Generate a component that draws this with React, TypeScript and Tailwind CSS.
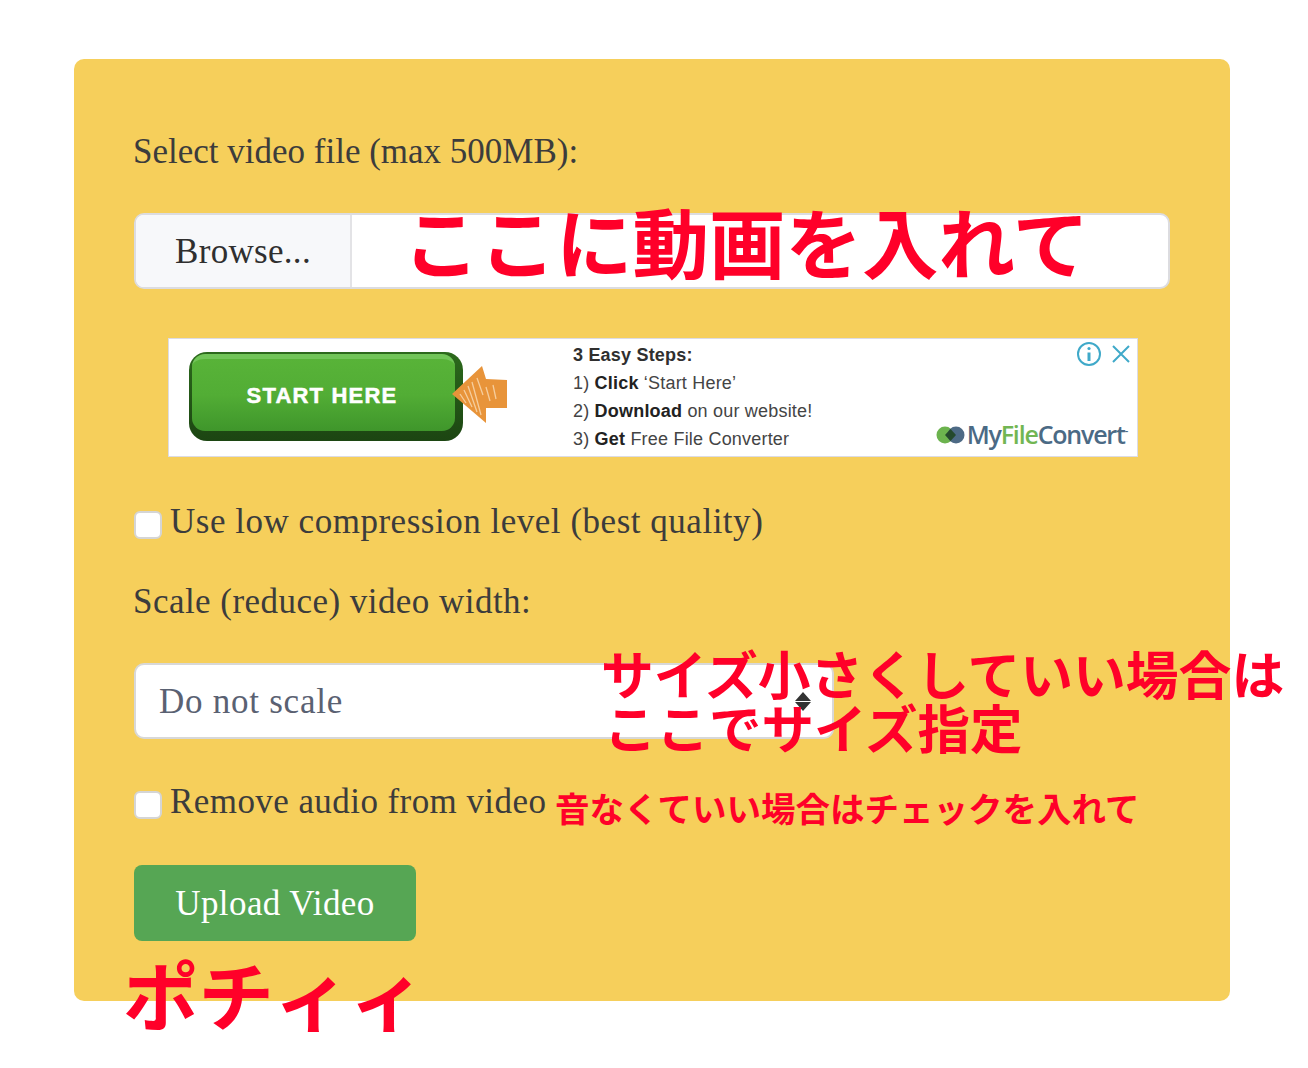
const serif = "font-['Liberation_Serif',serif]";

function Check({ label, track }: { label: string; track: string }) {
  return (
    <label className="flex h-[44px] items-center">
      <span className="mt-[6px] h-[28px] w-[28px] shrink-0 rounded-[6px] border-2 border-[#d5d5d5] bg-white" />
      <span className={`ml-[8px] text-[35px] leading-[44px] text-[#3c3c3c] ${track}`}>{label}</span>
    </label>
  );
}

function Ad() {
  return (
    <div className="relative ml-[34px] mt-[49px] flex h-[119px] w-[970px] border border-[#dcdce4] bg-white font-['Liberation_Sans',sans-serif]">
      <div className="relative ml-[20px] mt-[13px] h-[89px] w-[274px] rounded-[18px] bg-gradient-to-b from-[#2c6a1c] to-[#1c4512] pb-[10px] pl-[3px] pr-[8px] pt-[2px]">
        <div className="flex h-full items-center justify-center rounded-[13px] border-t-[5px] border-[#71c558] bg-gradient-to-b from-[#58b338] via-[#52ad35] to-[#3f962b] pr-[3px] pt-[1px] text-[22px] font-bold tracking-[1.2px] text-white [-webkit-text-stroke:0.5px_white]">
          START HERE
        </div>
      </div>
      <svg className="absolute left-[283px] top-[26px]" width="56" height="60" viewBox="0 0 56 60">
        <path d="M0 29 L30 1 L34 14 L55 15 L55 43 L34 43 L34 58 Z" fill="#e8943a" />
        <path d="M8 29 L14 38 M12 25 L20 42 M16 21 L25 47 M20 17 L29 50 M25 13 L31 30 M34 22 L38 36 M41 20 L44 34" stroke="#f6cd9c" strokeWidth="1.3" />
      </svg>
      <div className="ml-[110px] mt-[2px] text-[18px] leading-[28px] tracking-[0.2px] text-[#444]">
        <p className="font-bold text-[#2f2f2f]">3 Easy Steps:</p>
        <p>1) <b className="text-[#222]">Click</b> ‘Start Here’</p>
        <p>2) <b className="text-[#222]">Download</b> on our website!</p>
        <p>3) <b className="text-[#222]">Get</b> Free File Converter</p>
      </div>
      <svg className="absolute right-[35px] top-[2px]" width="26" height="26" viewBox="0 0 26 26" fill="none" stroke="#3fa9c9" strokeWidth="2">
        <circle cx="13" cy="13" r="11" />
        <path d="M13 11.5V20" strokeWidth="3" />
        <circle cx="13" cy="7.5" r="1.6" fill="#3fa9c9" stroke="none" />
      </svg>
      <svg className="absolute right-[6px] top-[5px]" width="20" height="20" viewBox="0 0 20 20" fill="none" stroke="#3fa9c9" strokeWidth="2">
        <path d="M2 2L18 18M18 2L2 18" />
      </svg>
      <div className="absolute right-[10px] top-[78px] flex items-center font-['Open_Sans',sans-serif] text-[25px] font-semibold leading-[34px] tracking-[-1.2px]">
        <svg className="mr-[2px] mt-[2px]" width="29" height="18" viewBox="0 0 29 18">
          <circle cx="9" cy="9" r="8.5" fill="#6cb34e" />
          <circle cx="20" cy="9" r="8.5" fill="#4d6a85" />
          <path d="M14.5 3L20 9L14.5 15L9 9Z" fill="#24492c" />
        </svg>
        <span className="text-[#4b6a85]">My</span>
        <span className="text-[#72b653]">File</span>
        <span className="text-[#4b6a85]">Convert</span>
        <span className="mb-[8px] text-[11px] leading-none text-[#4b6a85]">-</span>
      </div>
    </div>
  );
}

export default function App() {
  return (
    <div className="relative h-[1068px] w-[1308px] overflow-hidden bg-white">
      <div className={`relative ml-[74px] h-[1001px] pt-[59px] ${serif}`}>
        <form className="h-[942px] w-[1156px] rounded-[10px] bg-[#f6cf5b] px-[60px] pt-[71px]">
          <div className="-ml-px h-[44px] text-[35px] leading-[44px] text-[#3c3c3c]">Select video file (max 500MB):</div>

          <div className="mt-[39px] flex h-[76px] w-[1036px] overflow-hidden rounded-[10px] border-2 border-[#dcdce0] bg-white">
            <div className="flex w-[216px] items-center justify-center border-r-2 border-[#e3e3e6] bg-[#f7f8fa] pt-[2px] text-[35px] tracking-[0.3px] text-[#2f2f2f]">Browse...</div>
          </div>

          <Ad />

          <div className="mt-[43px]">
            <Check label="Use low compression level (best quality)" track="tracking-[0.52px]" />
          </div>

          <div className="-ml-px mt-[36px] h-[44px] text-[35px] leading-[44px] tracking-[0.46px] text-[#3c3c3c]">Scale (reduce) video width:</div>

          <div className="relative mt-[39px] flex h-[76px] w-[700px] items-center rounded-[10px] border-2 border-[#d8d8d8] bg-white pl-[23px] pt-[2px] text-[35px] tracking-[0.75px] text-[#5a6172]">
            Do not scale
            <svg className="absolute right-[21px] top-[27px]" width="16" height="19" viewBox="0 0 16 19" fill="#333">
              <path d="M8 0L16 9H0ZM0 10H16L8 19Z" />
            </svg>
          </div>

          <div className="mt-[41px]">
            <Check label="Remove audio from video" track="tracking-[0.43px]" />
          </div>

          <button type="button" className="mt-[41px] h-[76px] w-[282px] rounded-[8px] bg-[#56a654] pt-[2px] text-[35px] tracking-[0.4px] text-white">Upload Video</button>
        </form>

        {/* hand-written notes laid over the form */}
        <div className="pointer-events-none absolute inset-0 font-['Noto_Sans_CJK_JP',sans-serif] font-bold text-[#ff0029]">
          <span className="absolute left-[329px] top-[186px] whitespace-nowrap text-[76.5px] leading-[108px]">ここに動画を入れて</span>
          <span className="absolute left-[527px] top-[636px] whitespace-nowrap text-[52.8px] leading-[72px]">サイズ小さくしていい場合は</span>
          <span className="absolute left-[530px] top-[690px] whitespace-nowrap text-[52.5px] leading-[72px]">ここでサイズ指定</span>
          <span className="absolute left-[481px] top-[783px] whitespace-nowrap text-[34.5px] leading-[48px]">音なくていい場合はチェックを入れて</span>
          <span className="absolute left-[49px] top-[938px] whitespace-nowrap text-[75.5px] leading-[108px]">ポチィィ</span>
        </div>
      </div>
    </div>
  );
}
